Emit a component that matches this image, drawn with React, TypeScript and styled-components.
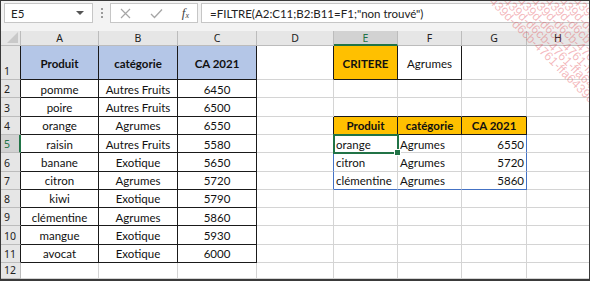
import React from "react";
import styled, { createGlobalStyle } from "styled-components";

const GlobalStyle = createGlobalStyle`
  html, body { margin: 0; padding: 0; background: #fff; }
  body { font-family: "Lato", "Noto Sans", sans-serif; }
`;

const GRID = "#d4d4d4";
const BLACK = "#1a1a1a";
const BLUE = "#4472c4";
const GREEN = "#217346";

type CellSpec = {
  text?: string;
  bg?: string;
  align?: "left" | "center" | "right";
  bold?: boolean;
  r?: string;
  b?: string;
};

//Sheet data, column A..H per row
const cols = ["A", "B", "C", "D", "E", "F", "G", "H"];
const colWidths = "20px 78px 79px 79px 77px 64px 64px 65px 1fr";

const products = [
  ["pomme", "Autres Fruits", "6450"],
  ["poire", "Autres Fruits", "6500"],
  ["orange", "Agrumes", "6550"],
  ["raisin", "Autres Fruits", "5580"],
  ["banane", "Exotique", "5650"],
  ["citron", "Agrumes", "5720"],
  ["kiwi", "Exotique", "5790"],
  ["clémentine", "Agrumes", "5860"],
  ["mangue", "Exotique", "5930"],
  ["avocat", "Exotique", "6000"],
];

const result = [
  ["orange", "Agrumes", "6550"],
  ["citron", "Agrumes", "5720"],
  ["clémentine", "Agrumes", "5860"],
];

function buildRow(row: number): CellSpec[] {
  const cells: CellSpec[] = cols.map(() => ({}));
  // left table A1:C11
  if (row === 1) {
    ["Produit", "catégorie", "CA 2021"].forEach((t, i) => {
      cells[i] = { text: t, bg: "#b4c6e7", bold: true, align: "center", r: BLACK, b: BLACK };
    });
    cells[3] = { r: BLACK };
    cells[4] = { text: "CRITERE", bg: "#ffc000", bold: true, align: "center", r: BLACK, b: BLACK };
    cells[5] = { text: "Agrumes", align: "center", r: BLACK, b: BLACK };
  } else if (row <= 11) {
    products[row - 2].forEach((t, i) => {
      cells[i] = { text: t, align: "center", r: BLACK, b: BLACK };
    });
  }
  if (row === 3) {
    cells[4] = { b: BLACK };
    cells[5] = { b: BLACK };
    cells[6] = { b: BLACK };
  }
  if (row === 4) {
    cells[3] = { r: BLACK };
    ["Produit", "catégorie", "CA 2021"].forEach((t, i) => {
      cells[4 + i] = { text: t, bg: "#ffc000", bold: true, align: "center", r: BLACK, b: BLACK };
    });
  }
  if (row >= 5 && row <= 7) {
    const d = result[row - 5];
    const bottom = row === 7 ? BLUE : undefined;
    cells[3] = { ...cells[3], r: BLUE };
    cells[4] = { text: d[0], align: "left", b: bottom };
    cells[5] = { text: d[1], align: "left", b: bottom };
    cells[6] = { text: d[2], align: "right", r: BLUE, b: bottom };
  }
  return cells;
}

function App() {
  const rows = Array.from({ length: 12 }, (_, i) => i + 1);
  return (
    <>
      <GlobalStyle />
      <Frame>
        <Toolbar>
          <NameBox>
            <span>E5</span>
            <Caret />
          </NameBox>
          <Dots>
            <i />
            <i />
            <i />
          </Dots>
          <ButtonBox>
            <svg width="11" height="11" viewBox="0 0 11 11">
              <path d="M1 1 L10 10 M10 1 L1 10" stroke="#a6a6a6" strokeWidth="1.2" />
            </svg>
            <svg width="13" height="11" viewBox="0 0 13 11">
              <path d="M1 6 L4.5 9.5 L12 1.5" stroke="#a6a6a6" strokeWidth="1.3" fill="none" />
            </svg>
            <Fx>
              f<sub>x</sub>
            </Fx>
          </ButtonBox>
          <FormulaBox>=FILTRE(A2:C11;B2:B11=F1;"non trouvé")</FormulaBox>
        </Toolbar>
        <Sheet>
          <Corner>
            <svg width="11" height="11" viewBox="0 0 11 11">
              <path d="M11 0 L11 11 L0 11 Z" fill="#c9c9c9" />
            </svg>
          </Corner>
          {cols.map((c, i) => (
            <ColHead key={c} $active={c === "E"} $last={i === cols.length - 1}>
              {c}
            </ColHead>
          ))}
          {rows.map((row) => {
            const cells = buildRow(row);
            return (
              <React.Fragment key={row}>
                <RowHead $active={row === 5} $edge={row <= 11 ? BLACK : undefined}>
                  {row}
                </RowHead>
                {cells.map((c, i) => (
                  <Cell
                    key={i}
                    $bg={c.bg}
                    $align={c.align}
                    $bold={c.bold}
                    $r={c.r}
                    $b={c.b}
                    $selected={row === 5 && i === 4}
                    $last={i === cols.length - 1}
                  >
                    {c.text}
                    {row === 5 && i === 4 && <Handle />}
                  </Cell>
                ))}
              </React.Fragment>
            );
          })}
        </Sheet>
        <Watermark>
          {Array.from({ length: 7 }, (_, i) => (
            <WmLine key={i} style={{ top: -24, left: 478 + i * 14 }}>
              -ffa6439d-d6cb-4761-ffa6439d-d6cb-4761
            </WmLine>
          ))}
        </Watermark>
      </Frame>
    </>
  );
}

const Frame = styled.div`
  position: relative;
  width: 590px;
  height: 281px;
  box-sizing: border-box;
  border: 1px solid #3a3a3a;
  border-bottom-width: 2px;
  overflow: hidden;
  display: flex;
  flex-direction: column;
  background: #fff;
`;

const Toolbar = styled.div`
  display: flex;
  align-items: center;
  height: 31px;
  padding: 0 0 6px 3px;
  box-sizing: border-box;
  background: #f3f3f3;
  font-family: "Lato", "Noto Sans", sans-serif;
  font-size: 11.5px;
  color: #222;
`;

const BoxBase = styled.div`
  height: 20px;
  box-sizing: border-box;
  background: #fff;
  border: 1px solid #c6c6c6;
  display: flex;
  align-items: center;
`;

const NameBox = styled(BoxBase)`
  width: 89px;
  padding: 0 8px 0 6px;
  justify-content: space-between;
`;

const Caret = styled.span`
  width: 0;
  height: 0;
  border-left: 4px solid transparent;
  border-right: 4px solid transparent;
  border-top: 4px solid #555;
`;

const Dots = styled.div`
  width: 17px;
  display: flex;
  flex-direction: column;
  align-items: center;
  gap: 2px;
  i {
    width: 2px;
    height: 2px;
    background: #9a9a9a;
  }
`;

const ButtonBox = styled(BoxBase)`
  width: 88px;
  padding: 0 8px 0 9px;
  justify-content: space-between;
  margin-right: 3px;
`;

const Fx = styled.span`
  font-family: "Liberation Serif", serif;
  font-style: italic;
  font-size: 13px;
  color: #444;
  sub {
    font-size: 8px;
    vertical-align: -1px;
  }
`;

const FormulaBox = styled(BoxBase)`
  flex: 1;
  padding-left: 8px;
  border-right: none;
  white-space: nowrap;
`;

const Sheet = styled.div`
  flex: 1;
  display: grid;
  grid-template-columns: ${colWidths};
  grid-template-rows: 15px 34px repeat(10, 18.3px) 1fr;
  font-size: 11.5px;
  color: #111;
`;

const Corner = styled.div`
  background: #e6e6e6;
  border-right: 1px solid #bcbcbc;
  border-bottom: 1px solid #bcbcbc;
  display: flex;
  align-items: flex-end;
  justify-content: flex-end;
  padding: 0 2px 2px 0;
`;

const ColHead = styled.div<{ $active: boolean; $last?: boolean }>`
  background: ${(p) => (p.$active ? "#d2d2d2" : "#e6e6e6")};
  border-right: ${(p) => (p.$last ? "none" : "1px solid #bcbcbc")};
  border-bottom: ${(p) => (p.$active ? `2px solid ${GREEN}` : "1px solid #bcbcbc")};
  color: ${(p) => (p.$active ? GREEN : "#222")};
  font-family: "Noto Sans", sans-serif;
  font-size: 10.5px;
  display: flex;
  align-items: center;
  justify-content: center;
  box-sizing: border-box;
`;

const RowHead = styled.div<{ $active: boolean; $edge?: string }>`
  background: ${(p) => (p.$active ? "#d2d2d2" : "#e6e6e6")};
  border-bottom: 1px solid #bcbcbc;
  border-right: ${(p) =>
    p.$active ? `2px solid ${GREEN}` : `1px solid ${p.$edge ?? "#bcbcbc"}`};
  color: ${(p) => (p.$active ? GREEN : "#222")};
  font-family: "Noto Sans", sans-serif;
  font-size: 10.5px;
  display: flex;
  align-items: flex-end;
  padding: 0 0 1px 3px;
  box-sizing: border-box;
  line-height: 14px;
`;

const Cell = styled.div<{
  $bg?: string;
  $align?: "left" | "center" | "right";
  $bold?: boolean;
  $r?: string;
  $b?: string;
  $selected?: boolean;
  $last?: boolean;
}>`
  position: relative;
  box-sizing: border-box;
  background: ${(p) => p.$bg ?? "#fff"};
  border-right: ${(p) => (p.$last ? "none" : `1px solid ${p.$r ?? GRID}`)};
  border-bottom: 1px solid ${(p) => p.$b ?? GRID};
  font-weight: ${(p) => (p.$bold ? 700 : 400)};
  display: flex;
  align-items: center;
  justify-content: ${(p) =>
    p.$align === "left" ? "flex-start" : p.$align === "right" ? "flex-end" : "center"};
  padding: 1px 2px 0;
  white-space: nowrap;
  outline: ${(p) => (p.$selected ? `2px solid ${GREEN}` : "none")};
  outline-offset: -1px;
  z-index: ${(p) => (p.$selected ? 2 : "auto")};
`;

const Handle = styled.span`
  position: absolute;
  right: -4px;
  bottom: -4px;
  width: 5px;
  height: 5px;
  background: ${GREEN};
  border: 1px solid #fff;
`;

const Watermark = styled.div`
  position: absolute;
  inset: 0;
  pointer-events: none;
`;

const WmLine = styled.div`
  position: absolute;
  white-space: nowrap;
  font-family: "Liberation Sans", sans-serif;
  font-size: 12.5px;
  color: rgba(225, 70, 80, 0.38);
  transform: rotate(45deg);
  transform-origin: left top;
`;

export default App;
